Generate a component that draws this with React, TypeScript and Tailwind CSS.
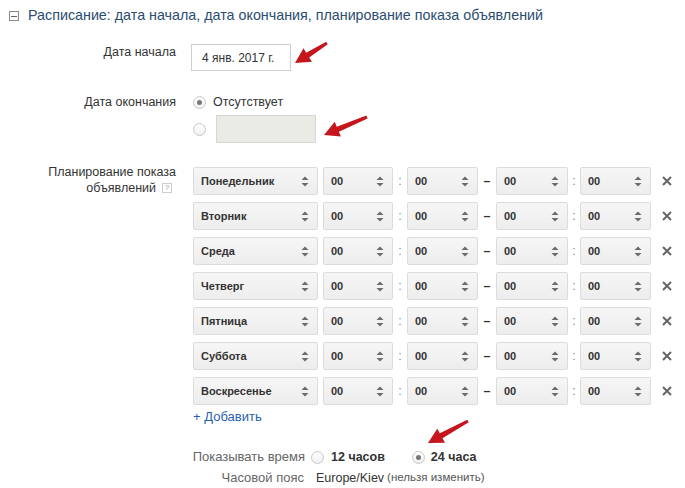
import React from 'react';

const days = ['Понедельник', 'Вторник', 'Среда', 'Четверг', 'Пятница', 'Суббота', 'Воскресенье'];

function Stepper() {
  return (
    <svg width="8" height="11" viewBox="0 0 8 11" className="shrink-0">
      <path d="M4 0.5 L7.5 4 L0.5 4 Z" fill="#6b6b6b" />
      <path d="M4 10.5 L7.5 7 L0.5 7 Z" fill="#6b6b6b" />
    </svg>
  );
}

function Select({ value, w }: { value: string; w: string }) {
  return (
    <div
      className={`${w} h-[28px] shrink-0 flex items-center justify-between pl-[7px] pr-[8px] border border-[#dcdcdc] rounded-[2px] bg-gradient-to-b from-[#f6f6f6] to-[#ededed] text-[11px] font-bold text-[#333]`}
    >
      <span>{value}</span>
      <Stepper />
    </div>
  );
}

function Radio({ checked }: { checked?: boolean }) {
  return (
    <span className="w-[13px] h-[13px] shrink-0 rounded-full border border-[#c8c8c8] bg-gradient-to-b from-white to-[#f0f0f0] flex items-center justify-center">
      {checked && <span className="w-[5px] h-[5px] rounded-full bg-[#777]" />}
    </span>
  );
}

// red annotation arrow, tail -> tip
function arrowPoints(x1: number, y1: number, x2: number, y2: number) {
  const dx = x2 - x1;
  const dy = y2 - y1;
  const len = Math.hypot(dx, dy);
  const ux = dx / len;
  const uy = dy / len;
  const nx = -uy;
  const ny = ux;
  const hl = 15;
  const hw = 8;
  const bx = x2 - ux * hl;
  const by = y2 - uy * hl;
  const pts = [
    [x1 + nx * 1.5, y1 + ny * 1.5],
    [bx + nx * 2.8, by + ny * 2.8],
    [bx + nx * hw, by + ny * hw],
    [x2, y2],
    [bx - nx * hw, by - ny * hw],
    [bx - nx * 2.8, by - ny * 2.8],
    [x1 - nx * 1.5, y1 - ny * 1.5],
  ];
  return pts.map((p) => p.join(',')).join(' ');
}

export default function App() {
  return (
    <div className="relative w-[685px] h-[488px] overflow-hidden bg-white font-['Liberation_Sans',Arial,sans-serif] text-[12.5px] text-[#333]">
      {/* Header */}
      <div className="mt-[6px] h-[20px] flex items-center pl-[9px]">
        <span className="w-[10px] h-[10px] border border-[#8a8a8a] flex items-center justify-center">
          <span className="w-[6px] h-px bg-[#666]" />
        </span>
        <span className="ml-[9px] text-[14.3px] text-[#2a4d70]">
          Расписание: дата начала, дата окончания, планирование показа объявлений
        </span>
      </div>

      {/* Start date */}
      <div className="mt-[18px] flex items-start">
        <div className="w-[177px] text-right leading-4 pr-px">Дата начала</div>
        <div className="ml-[14px] w-[100px] h-[27px] border border-[#cfcfcf] bg-white flex items-center pl-[10px] text-[12px] text-[#333]">
          4 янв. 2017 г.
        </div>
      </div>

      {/* End date */}
      <div className="mt-[23px] flex items-start">
        <div className="w-[177px] text-right leading-4 pr-px">Дата окончания</div>
        <div className="ml-[16px] flex flex-col">
          <div className="h-4 flex items-center gap-[7px]">
            <Radio checked />
            <span>Отсутствует</span>
          </div>
          <div className="mt-[5px] flex items-center">
            <Radio />
            <div className="ml-[10px] w-[100px] h-[28px] border border-[#d6d6d2] bg-[#ebebe6]" />
          </div>
        </div>
      </div>

      {/* Schedule */}
      <div className="mt-[24px] flex items-start">
        <div className="w-[177px] -mt-[3px] text-right leading-4 pr-px">
          <div>Планирование показа</div>
          <div className="flex items-center justify-end">
            объявлений
            <span className="ml-[6px] mr-[4px] w-[10px] h-[10px] border border-[#cdcdcd] text-[8px] leading-[8px] text-[#999] flex items-center justify-center">
              ?
            </span>
          </div>
        </div>
        <div className="ml-[16px] flex flex-col">
          <div className="flex flex-col gap-[7px]">
            {days.map((d) => (
              <div key={d} className="flex items-center">
                <Select value={d} w="w-[125px]" />
                <div className="w-[5px]" />
                <Select value="00" w="w-[70px]" />
                <span className="w-[14px] text-center text-[#888]">:</span>
                <Select value="00" w="w-[71px]" />
                <span className="w-[18px] text-center font-bold text-[#333]">–</span>
                <Select value="00" w="w-[72px]" />
                <span className="w-[12px] text-center text-[#888]">:</span>
                <Select value="00" w="w-[71px]" />
                <span className="w-[32px] flex items-center justify-center">
                  <svg width="10" height="10" viewBox="0 0 10 10">
                    <path d="M1 1 L9 9 M9 1 L1 9" stroke="#666" strokeWidth="2" />
                  </svg>
                </span>
              </div>
            ))}
          </div>
          <div className="mt-[4px] leading-4 text-[13px] text-[#2a62b0]">+ Добавить</div>
        </div>
      </div>

      {/* Time format */}
      <div className="mt-[24px] pl-[190px] flex items-center h-4">
        <span className="w-[115px] text-right text-[13px] text-[#666]">Показывать время</span>
        <span className="ml-[6px]">
          <Radio />
        </span>
        <span className="ml-[7px] font-bold text-[12.5px] text-[#333]">12 часов</span>
        <span className="ml-[27px]">
          <Radio checked />
        </span>
        <span className="ml-[6px] font-bold text-[12.5px] text-[#333]">24 часа</span>
      </div>
      <div className="mt-[5px] pl-[190px] flex items-center h-4">
        <span className="w-[114px] text-right text-[13px] text-[#666]">Часовой пояс</span>
        <span className="ml-[12px] text-[#333]">Europe/Kiev</span>
        <span className="ml-[3px] text-[11.5px] text-[#555]">(нельзя изменить)</span>
      </div>

      {/* Annotation arrows */}
      <svg className="absolute inset-0 pointer-events-none" width="685" height="488">
        <polygon points={arrowPoints(327, 43, 295, 63)} fill="#c4161c" />
        <polygon points={arrowPoints(367, 117, 324, 135)} fill="#c4161c" />
        <polygon points={arrowPoints(468, 421, 428, 443)} fill="#c4161c" />
      </svg>
    </div>
  );
}
